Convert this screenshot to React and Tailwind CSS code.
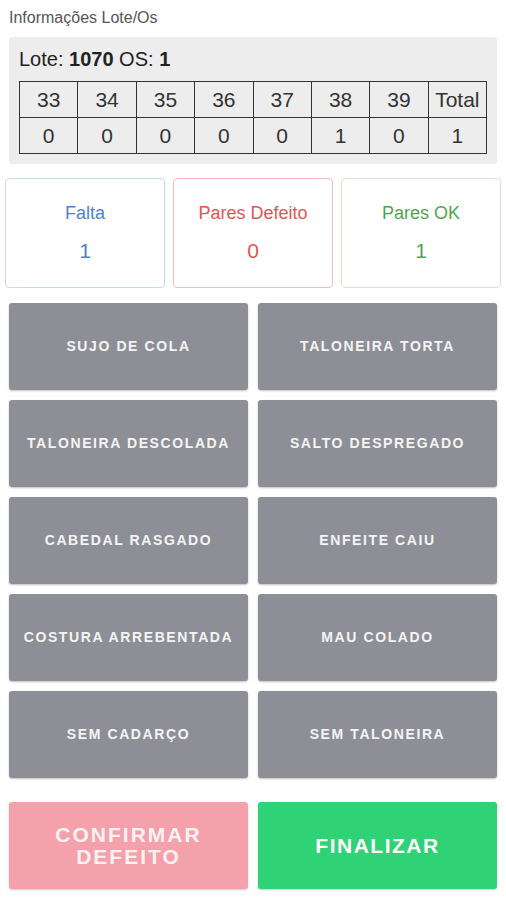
const sizes = ["33", "34", "35", "36", "37", "38", "39", "Total"];
const counts = ["0", "0", "0", "0", "0", "1", "0", "1"];

const defects = [
  "SUJO DE COLA",
  "TALONEIRA TORTA",
  "TALONEIRA DESCOLADA",
  "SALTO DESPREGADO",
  "CABEDAL RASGADO",
  "ENFEITE CAIU",
  "COSTURA ARREBENTADA",
  "MAU COLADO",
  "SEM CADARÇO",
  "SEM TALONEIRA",
];

function StatCard({ label, value, border, text }) {
  return (
    <div className={`flex-1 h-[110px] rounded-[4px] border-[1.5px] bg-white flex flex-col items-center pt-[24px] ${border}`}>
      <span className={`text-[18px] leading-[20px] ${text}`}>{label}</span>
      <span className={`mt-[16px] text-[21px] leading-[24px] ${text}`}>{value}</span>
    </div>
  );
}

export default function App() {
  return (
    <div className="w-[506px] h-[900px] bg-white font-['Liberation_Sans',Arial,sans-serif] overflow-hidden">
      <div className="pl-[9px] pt-[9px] text-[16px] leading-[18px] text-[#555]">Informações Lote/Os</div>

      <div className="mx-[9px] mt-[10px] bg-[#ededed] rounded-[3px] px-[10px] pt-[11px] pb-[10px]">
        <div className="text-[20px] leading-[23px] text-[#222]">
          Lote: <b className="font-bold">1070</b> OS: <b className="font-bold">1</b>
        </div>
        <table className="mt-[10px] w-full border-collapse table-fixed">
          <tbody>
            <tr>
              {sizes.map((s) => (
                <td key={s} className="border-[1.5px] border-[#333] h-[36px] text-center text-[21px] text-[#333] p-0">
                  {s}
                </td>
              ))}
            </tr>
            <tr>
              {counts.map((c, i) => (
                <td key={i} className="border-[1.5px] border-[#333] h-[36px] text-center text-[21px] text-[#333] p-0">
                  {c}
                </td>
              ))}
            </tr>
          </tbody>
        </table>
      </div>

      <div className="flex gap-[8px] px-[5px] mt-[14px]">
        <StatCard label="Falta" value="1" border="border-[#c6d9f3]" text="text-[#4f7fcf]" />
        <StatCard label="Pares Defeito" value="0" border="border-[#f3bcbc]" text="text-[#e05656]" />
        <StatCard label="Pares OK" value="1" border="border-[#cfe8cf]" text="text-[#4fa653]" />
      </div>

      <div className="grid grid-cols-2 gap-x-[10px] gap-y-[10px] px-[9px] mt-[15px]">
        {defects.map((d) => (
          <button
            key={d}
            className="h-[87px] rounded-[3px] bg-[#8e8f96] shadow-[0_1px_2px_rgba(0,0,0,0.25)] text-[#f4f4f4] text-[14px] font-bold tracking-[1.6px]"
          >
            {d}
          </button>
        ))}
      </div>

      <div className="grid grid-cols-2 gap-x-[10px] px-[9px] mt-[24px]">
        <button className="h-[87px] rounded-[3px] bg-[#f4a1ab] shadow-[0_1px_2px_rgba(0,0,0,0.2)] text-[#fdf2f3] text-[21px] leading-[22px] font-bold tracking-[2px]">
          CONFIRMAR
          <br />
          DEFEITO
        </button>
        <button className="h-[87px] rounded-[3px] bg-[#2fd274] shadow-[0_1px_2px_rgba(0,0,0,0.2)] text-white text-[21px] font-bold tracking-[1.5px]">
          FINALIZAR
        </button>
      </div>
    </div>
  );
}
